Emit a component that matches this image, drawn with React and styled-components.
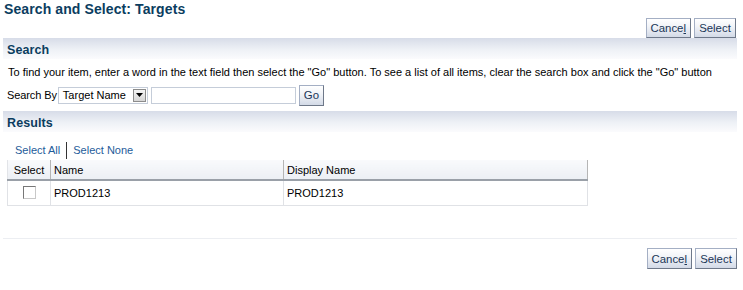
import React from "react";
import styled, { createGlobalStyle } from "styled-components";

const Global = createGlobalStyle`
  html, body { margin: 0; padding: 0; background: #fff; }
  body { font-family: "Liberation Sans", Arial, sans-serif; font-size: 11px; color: #000; }
`;

const Page = styled.div`
  width: 743px;
  height: 290px;
  box-sizing: border-box;
  padding: 1px 6px 0 3px;
  display: flex;
  flex-direction: column;
`;

const Title = styled.h1`
  margin: 0 0 0 1px;
  font-size: 14px;
  font-weight: bold;
  color: #0b3d5f;
  line-height: 17px;
  letter-spacing: 0.1px;
`;

const ButtonRow = styled.div`
  display: flex;
  justify-content: flex-end;
  gap: 3px;
  padding-right: ${(p) => p.$pr || 0}px;
  margin-top: ${(p) => p.$mt || 0}px;
`;

const Btn = styled.button`
  font-family: "Liberation Sans", Arial, sans-serif;
  font-size: 11.4px;
  color: #1a3557;
  height: ${(p) => p.$h || 20}px;
  min-width: ${(p) => p.$w || 0}px;
  padding: 0 4px;
  background: linear-gradient(#ffffff 0%, #f2f4f8 40%, #d3dae7 100%);
  border: 1px solid #a4afc4;
  border-right-color: #6e7889;
  border-bottom-color: #6e7889;
  border-radius: 0;
  cursor: pointer;
`;

const SectionBar = styled.div`
  height: 20px;
  margin-top: ${(p) => p.$mt || 0}px;
  background: linear-gradient(#d7dce8 0%, #eef1f6 55%, #fbfbfd 100%);
  display: flex;
  align-items: flex-end;
  padding: 0 0 1px 4px;
  font-size: 12.5px;
  font-weight: bold;
  color: #0b3d5f;
  line-height: 16px;
  letter-spacing: 0.1px;
`;

const Instructions = styled.p`
  margin: 6px 0 0 5px;
  font-size: 11px;
  line-height: 14px;
  white-space: nowrap;
`;

const SearchRow = styled.div`
  display: flex;
  align-items: center;
  gap: 3px;
  margin: 5px 0 0 4px;
  height: 22px;
`;

const Label = styled.span`
  margin-right: -2px;
  letter-spacing: -0.1px;
`;

const SelectBox = styled.div`
  width: 84px;
  height: 15px;
  border: 1px solid #c5cdd9;
  background: #fff;
  display: flex;
  align-items: center;
  justify-content: space-between;
  padding-left: 4px;
  box-sizing: content-box;
`;

const Arrow = styled.span`
  width: 13px;
  height: 13px;
  margin-right: 1px;
  background: linear-gradient(#f4f4f4, #d6d6d6);
  border: 1px solid #8c8c8c;
  box-sizing: border-box;
  display: flex;
  align-items: center;
  justify-content: center;
`;

const TextInput = styled.input`
  width: 143px;
  height: 15px;
  border: 1px solid #c5cdd9;
  padding: 0;
`;

const Links = styled.div`
  display: flex;
  align-items: center;
  margin: 11px 0 0 12px;
  height: 14px;
`;

const Link = styled.a`
  color: #1e5c9a;
  text-decoration: none;
  padding: ${(p) => (p.$first ? "0 6px 0 0" : "0 0 0 6px")};
  border-left: ${(p) => (p.$first ? "none" : "1px solid #333")};
  line-height: 17px;
`;

const Table = styled.table`
  margin: 3px 0 0 4px;
  width: 581px;
  border-collapse: collapse;
  font-size: 11px;
`;

const Th = styled.th`
  text-align: ${(p) => p.$align || "left"};
  font-weight: normal;
  height: 19px;
  padding: 0 3px;
  width: ${(p) => p.$w || "auto"};
  background: linear-gradient(#f9fafc, #eceff4);
  border-left: 1px solid #b5b5b5;
  border-right: 1px solid #b5b5b5;
  border-bottom: 2px solid #9aa0a8;
  border-top: none;
  &:first-child { border-left: 1px solid #e2e4e8; }
`;

const Td = styled.td`
  height: 24px;
  padding: 0 3px;
  text-align: ${(p) => p.$align || "left"};
  border: 1px solid #e0e2e6;
`;

const Check = styled.span`
  display: inline-block;
  width: 11px;
  height: 11px;
  border: 1px solid #777;
  border-right-color: #c8c8c8;
  border-bottom-color: #c8c8c8;
  background: #fff;
  vertical-align: middle;
  margin-top: -2px;
`;

const Divider = styled.div`
  height: 1px;
  background: #eceef2;
  margin-top: ${(p) => p.$mt || 0}px;
`;

export default function App() {
  return (
    <>
      <Global />
      <Page>
        <Title>Search and Select: Targets</Title>
        <ButtonRow $mt={0} $pr={1}>
          <Btn $w={44}>Cance<u>l</u></Btn>
          <Btn $w={42}>Select</Btn>
        </ButtonRow>
        <SectionBar>Search</SectionBar>
        <Instructions>
          To find your item, enter a word in the text field then select the "Go" button. To see a list of all items, clear the search box and click the "Go" button
        </Instructions>
        <SearchRow>
          <Label>Search By</Label>
          <SelectBox>
            Target Name
            <Arrow>
              <svg width="7" height="4" viewBox="0 0 7 4">
                <path d="M0 0h7L3.5 4z" fill="#000" />
              </svg>
            </Arrow>
          </SelectBox>
          <TextInput />
          <Btn $h={21} $w={25}>Go</Btn>
        </SearchRow>
        <SectionBar $mt={5}>Results</SectionBar>
        <Links>
          <Link $first>Select All</Link>
          <Link>Select None</Link>
        </Links>
        <Table>
          <thead>
            <tr>
              <Th $align="center" $w="36px">Select</Th>
              <Th $w="226px">Name</Th>
              <Th>Display Name</Th>
            </tr>
          </thead>
          <tbody>
            <tr>
              <Td $align="center"><Check /></Td>
              <Td>PROD1213</Td>
              <Td>PROD1213</Td>
            </tr>
          </tbody>
        </Table>
        <Divider $mt={32} />
        <ButtonRow $mt={9} $pr={-1}>
          <Btn $h={21} $w={42}>Cance<u>l</u></Btn>
          <Btn $h={21} $w={42}>Select</Btn>
        </ButtonRow>
      </Page>
    </>
  );
}
